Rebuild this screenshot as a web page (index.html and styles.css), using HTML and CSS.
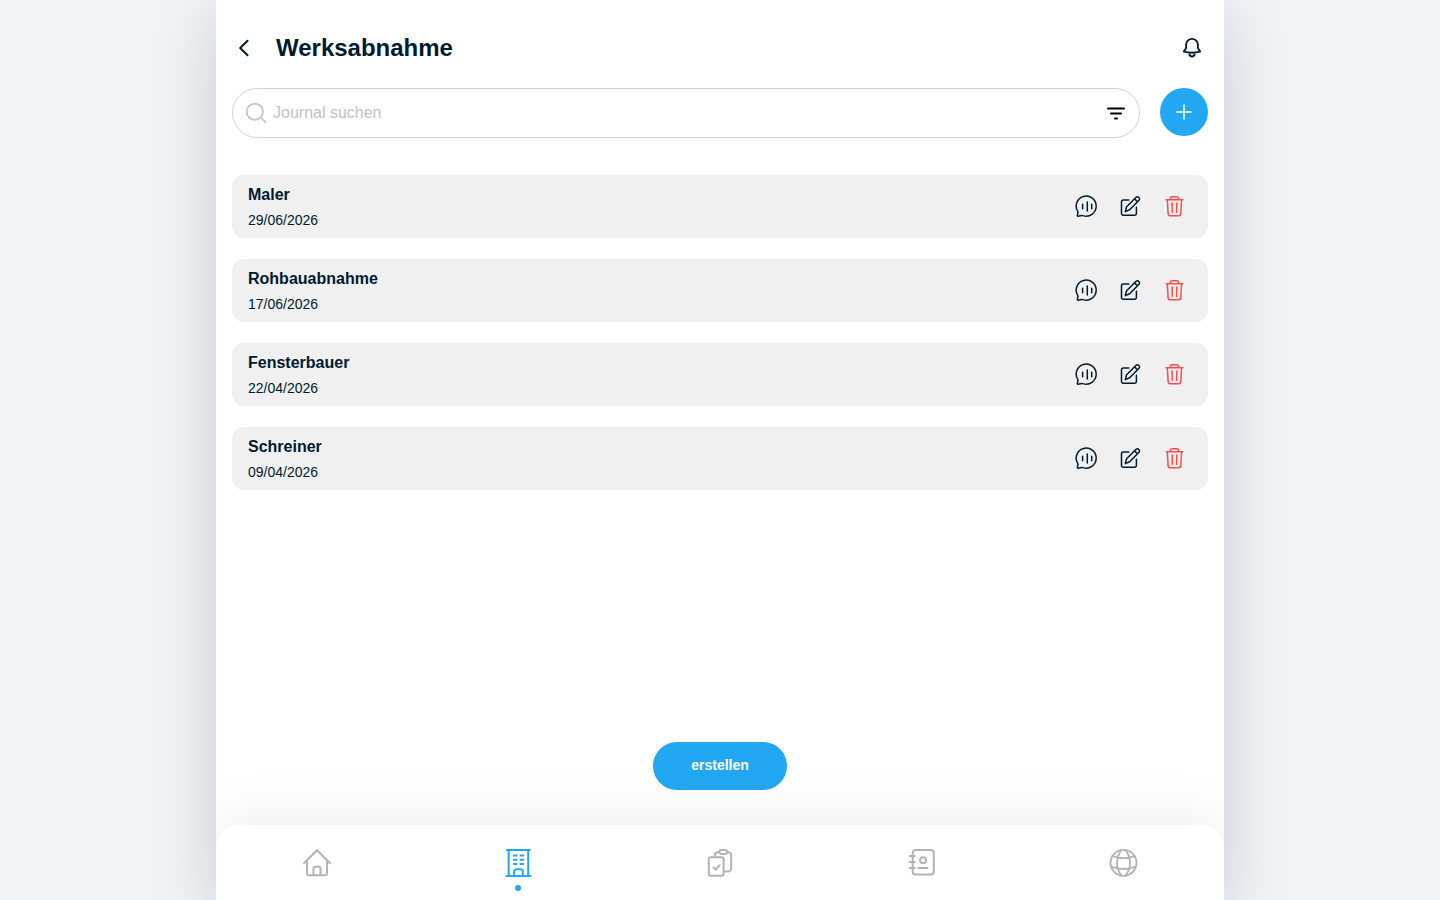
FILE: index.html
```html
<!DOCTYPE html>
<html lang="de">
<head>
<meta charset="utf-8">
<meta name="viewport" content="width=device-width, initial-scale=1">
<title>Werksabnahme</title>
<link rel="stylesheet" href="styles.css">
</head>
<body>
<svg class="sprite" aria-hidden="true">
  <symbol id="voice" viewBox="-1 0.500 24 24"><path d="M2.400 21.600C2 20.200 3.300 18.800 2.900 17.200A10 10 0 1 1 8 21.100C6.400 20.500 4.500 22.200 2.400 21.600ZM7.600 9.800v4.400M12.300 7.500v9M16.700 9.800v4.400"/></symbol>
  <symbol id="edit" viewBox="-0.300 0.700 24 24"><path d="M10.500 5.700H5a1.800 1.800 0 0 0-1.800 1.800v11.700A1.800 1.800 0 0 0 5 21h11.300a1.800 1.800 0 0 0 1.800-1.800V13M7 17.300l1.300-4.900L17.800 3a1.700 1.700 0 0 1 2.500 0l.4.400a1.700 1.700 0 0 1 0 2.500L11.400 15.400ZM16.300 4.600l2.900 2.900"/></symbol>
  <symbol id="trash" viewBox="-0.300 0.500 24 24"><path d="M3.800 5.300h16.700M5 5.500l.8 13.600a2.100 2.100 0 0 0 2.100 2.100h8.500a2.100 2.100 0 0 0 2.100-2.100l.8-13.600M8.200 5.200V3.700a1.500 1.500 0 0 1 1.500-1.500h4.900a1.500 1.500 0 0 1 1.500 1.500v1.500M9.800 8.500l.2 9.300M14.500 8.500l-.2 9.300"/></symbol>
</svg>
<div class="app">
  <header class="header">
    <button class="icon-button" aria-label="Zurück"><svg class="icon" viewBox="0 0 24 24"><path stroke-width="2" d="M15.500 4.800L8.200 12l7.300 7.300"/></svg></button>
    <h1 class="title">Werksabnahme</h1>
    <button class="icon-button" aria-label="Benachrichtigungen"><svg class="icon" viewBox="0 0 24 24"><path stroke-width="1.900" d="M3.900 15.700c0-1.500 2.200-2 2.200-4.200V8.800a5.900 5.900 0 0 1 11.800 0v2.700c0 2.200 2.200 2.700 2.200 4.200q-8.100 2-16.200 0ZM9.300 17a2.700 3.500 0 0 0 5.400 0"/></svg></button>
  </header>
  <main class="main">
    <div class="toolbar">
      <div class="search">
        <svg class="search-icon" viewBox="0 0 24 24"><circle cx="10.800" cy="10.700" r="8.100"/><path d="M16.700 16.500l4.700 4.700"/></svg>
        <input class="search-input" type="search" placeholder="Journal suchen" aria-label="Journal suchen">
        <button class="icon-button" aria-label="Filter"><svg class="icon filter" viewBox="0 0 24 24"><path d="M4 7.500h16M7 12.500h10M11 17.500h2"/></svg></button>
      </div>
      <button class="add" aria-label="Hinzufügen"><svg class="icon" viewBox="0 0 24 24"><path d="M12 4.800v14.400M4.800 12h14.400"/></svg></button>
    </div>
    <ul class="list">
      <li class="card">
        <div class="info"><h2 class="name">Maler</h2><time class="date">29/06/2026</time></div>
        <div class="actions"><button class="icon-button" aria-label="Sprachnotiz"><svg class="icon"><use href="#voice"/></svg></button><button class="icon-button" aria-label="Bearbeiten"><svg class="icon"><use href="#edit"/></svg></button><button class="icon-button danger" aria-label="Löschen"><svg class="icon"><use href="#trash"/></svg></button></div>
      </li>
      <li class="card">
        <div class="info"><h2 class="name">Rohbauabnahme</h2><time class="date">17/06/2026</time></div>
        <div class="actions"><button class="icon-button" aria-label="Sprachnotiz"><svg class="icon"><use href="#voice"/></svg></button><button class="icon-button" aria-label="Bearbeiten"><svg class="icon"><use href="#edit"/></svg></button><button class="icon-button danger" aria-label="Löschen"><svg class="icon"><use href="#trash"/></svg></button></div>
      </li>
      <li class="card">
        <div class="info"><h2 class="name">Fensterbauer</h2><time class="date">22/04/2026</time></div>
        <div class="actions"><button class="icon-button" aria-label="Sprachnotiz"><svg class="icon"><use href="#voice"/></svg></button><button class="icon-button" aria-label="Bearbeiten"><svg class="icon"><use href="#edit"/></svg></button><button class="icon-button danger" aria-label="Löschen"><svg class="icon"><use href="#trash"/></svg></button></div>
      </li>
      <li class="card">
        <div class="info"><h2 class="name">Schreiner</h2><time class="date">09/04/2026</time></div>
        <div class="actions"><button class="icon-button" aria-label="Sprachnotiz"><svg class="icon"><use href="#voice"/></svg></button><button class="icon-button" aria-label="Bearbeiten"><svg class="icon"><use href="#edit"/></svg></button><button class="icon-button danger" aria-label="Löschen"><svg class="icon"><use href="#trash"/></svg></button></div>
      </li>
    </ul>
    <button class="create">erstellen</button>
  </main>
  <nav class="nav" aria-label="Hauptnavigation">
    <a class="nav-link" href="#home" aria-label="Start"><svg class="nav-icon" viewBox="0 0 32 32"><path d="M3 16.200L16 3.200l13 13M6 13.500V26.500a1.800 1.800 0 0 0 1.800 1.800h16.400a1.800 1.800 0 0 0 1.800-1.800V13.500M12.500 28V21.300a1.600 1.600 0 0 1 1.600-1.600h3.800a1.600 1.600 0 0 1 1.600 1.600V28"/></svg></a>
    <a class="nav-link active" href="#projects" aria-label="Projekte" aria-current="page"><svg class="nav-icon" viewBox="0 0 32 32"><path stroke-linecap="butt" d="M4.200 3h24.300M3.700 29h25.600M6.700 3v26M26.200 3v26M12.200 29v-4.500a2.200 2.200 0 0 1 2.200-2.200h4.200a2.200 2.200 0 0 1 2.200 2.200V29M11 8.500h4.300M17.800 8.500h4.300M11 12.700h4.300M17.800 12.700h4.300M11 16.900h4.300M17.800 16.900h4.300"/></svg></a>
    <a class="nav-link" href="#tasks" aria-label="Aufgaben"><svg class="nav-icon" viewBox="0 0 32 32"><path d="M6.800 10.300h10.800a2 2 0 0 1 2 2v14.400a2 2 0 0 1-2 2H6.800a2 2 0 0 1-2-2V12.300a2 2 0 0 1 2-2ZM10.800 10V8.200a3 3 0 0 1 3-3h1.700M22.900 5.200h1.300a3 3 0 0 1 3 3v13.300a3 3 0 0 1-3 3H20M17.300 3h3.900a1.900 1.900 0 0 1 0 3.900h-3.900a1.900 1.900 0 0 1 0-3.900ZM9.500 20.500l2.200 2.200l4-4.500"/></svg></a>
    <a class="nav-link" href="#contacts" aria-label="Kontakte"><svg class="nav-icon" viewBox="0 0 32 32"><path d="M9.700 3h15.100a3 3 0 0 1 3 3v18.400a3 3 0 0 1-3 3H9.700a3 3 0 0 1-3-3V6a3 3 0 0 1 3-3ZM3.700 8.900h5M3.700 15h5M3.700 21h5M12.500 21h9"/><circle cx="17.100" cy="13.300" r="3"/></svg></a>
    <a class="nav-link" href="#language" aria-label="Sprache"><svg class="nav-icon globe" viewBox="0 0 32 32"><circle cx="16.500" cy="15.800" r="13"/><path d="M14.500 3C8.500 11 8.500 21 14.500 28.500M18.500 3C24.500 11 24.500 21 18.500 28.500M5.300 9.100q11.200 4 22.400 0M4.200 19.600q12.300 4.600 24.600 0"/></svg></a>
  </nav>
</div>
</body>
</html>
```
FILE: styles.css
```css
* { box-sizing: border-box; }
body {
  margin: 0;
  background: #f0f4f9;
  color: #001a30;
  font-family: "Liberation Sans", Arial, sans-serif;
}
button { font: inherit; color: inherit; border: 0; padding: 0; background: none; cursor: pointer; }
.sprite { display: none; }
.app {
  display: flex;
  flex-direction: column;
  width: 70%;
  min-height: 100vh;
  margin: 0 auto;
  background: #fff;
  box-shadow: 0 16px 60px rgba(0, 20, 20, 0.17);
}
.header {
  display: flex;
  align-items: center;
  padding: 32px 20px 24px 16px;
}
.title { flex: 1; margin: 0 0 0 20px; font-size: 24px; line-height: 32px; }
.icon-button { display: flex; }
.icon {
  display: block;
  width: 24px;
  height: 24px;
  fill: none;
  stroke: currentColor;
  stroke-width: 1.5;
  stroke-linecap: round;
  stroke-linejoin: round;
}
.main { flex: 1; display: flex; flex-direction: column; padding: 0 16px 35px; }
.toolbar { display: flex; gap: 20px; }
.search {
  flex: 1;
  display: flex;
  align-items: center;
  gap: 5px;
  height: 50px;
  padding: 0 11px;
  border: 1px solid #d2d2d2;
  border-radius: 25px;
}
.search-icon { width: 24px; height: 24px; fill: none; stroke: #c4c4c4; stroke-width: 1.7; stroke-linecap: round; }
.search-input {
  flex: 1;
  min-width: 0;
  padding: 0;
  border: 0;
  outline: 0;
  background: none;
  color: inherit;
  font: 16px/24px "Liberation Sans", Arial, sans-serif;
}
.search-input::placeholder { color: #c2c2c2; }
.filter { stroke: #000; stroke-width: 2; }
.add {
  display: flex;
  align-items: center;
  justify-content: center;
  width: 48px;
  height: 48px;
  border-radius: 50%;
  background: #22a7f2;
  color: #fff;
}
.list { display: flex; flex-direction: column; gap: 21px; margin: 37px 0 0; padding: 0; list-style: none; }
.card {
  display: flex;
  align-items: center;
  justify-content: space-between;
  padding: 8px 22px 8px 16px;
  border-radius: 12px;
  background: #f0f0f0;
}
.name { margin: 0; font-size: 16px; line-height: 24px; }
.date { display: block; margin-top: 3px; font-size: 14px; line-height: 20px; }
.actions { display: flex; gap: 20px; }
.danger { color: #ff4b4b; }
.create {
  align-self: center;
  height: 48px;
  margin-top: auto;
  padding: 0 38px 2px;
  border-radius: 24px;
  background: #22a7f2;
  color: #fff;
  font: 700 14px/20px "Liberation Sans", Arial, sans-serif;
}
.nav {
  display: flex;
  height: 75px;
  border-radius: 24px 24px 0 0;
  background: #fff;
  box-shadow: 0 -4px 60px rgba(0, 0, 0, 0.08);
  clip-path: inset(-80px 0 0 0);
}
.nav-link { flex: 1; display: flex; flex-direction: column; align-items: center; padding-top: 22px; color: #b3b3b3; }
.nav-icon {
  width: 32px;
  height: 32px;
  fill: none;
  stroke: currentColor;
  stroke-width: 2;
  stroke-linecap: round;
  stroke-linejoin: round;
}
.globe { stroke-width: 1.8; }
.active { color: #22a7f2; }
.active::after { content: ""; width: 6px; height: 6px; margin-top: 6px; border-radius: 50%; background: currentColor; }
```
